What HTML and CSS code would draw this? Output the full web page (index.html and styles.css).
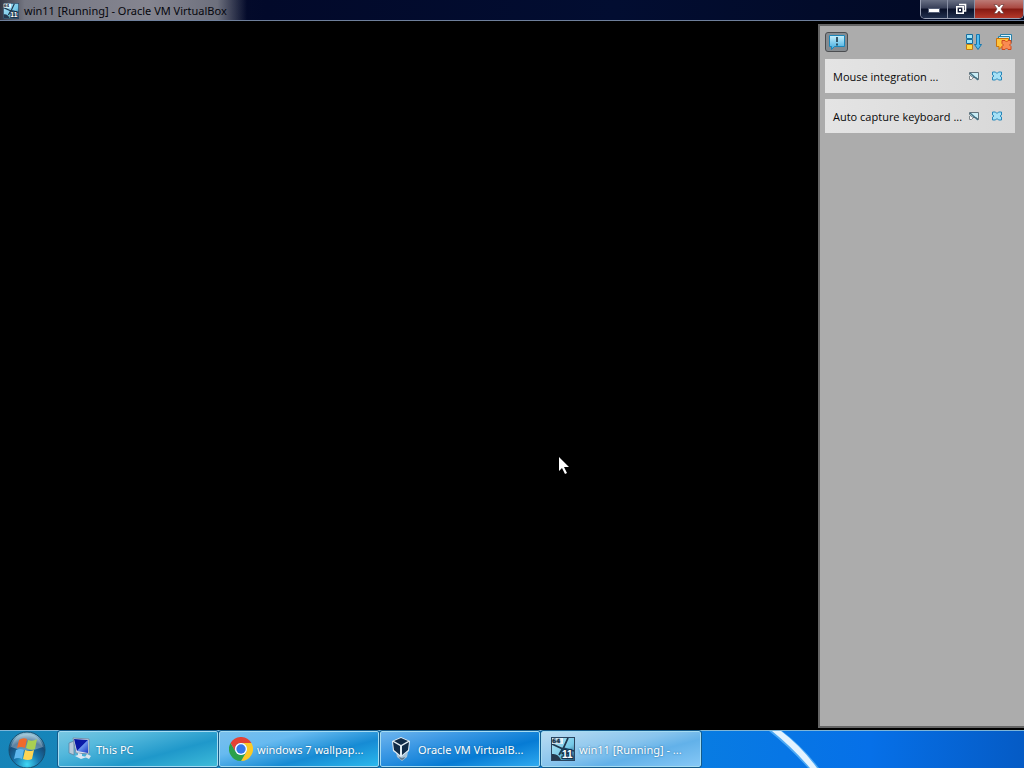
FILE: index.html
```html
<!DOCTYPE html>
<html lang="en">
<head>
<meta charset="utf-8">
<title>win11 [Running] - Oracle VM VirtualBox</title>
<link rel="stylesheet" href="styles.css">
</head>
<body>
<svg class="defs" aria-hidden="true">
  <defs>
    <linearGradient id="sky" x1="0" y1="0" x2="0" y2="1"><stop offset="0" stop-color="#c9f1fc"/><stop offset="1" stop-color="#3ba9df"/></linearGradient>
    <linearGradient id="slate" x1="0" y1="0" x2="1" y2="1"><stop offset="0" stop-color="#b8e6f5"/><stop offset=".6" stop-color="#74c9e8"/><stop offset="1" stop-color="#28506c"/></linearGradient>
    <radialGradient id="orb" cx=".5" cy=".9" r=".85"><stop offset="0" stop-color="#3fd8f5"/><stop offset=".4" stop-color="#1877ae"/><stop offset=".75" stop-color="#164b78"/><stop offset="1" stop-color="#8cbcd2"/></radialGradient>
    <linearGradient id="screen" x1="0" y1="0" x2="1" y2="1"><stop offset="0" stop-color="#0717a0"/><stop offset=".5" stop-color="#0a19a8"/><stop offset=".55" stop-color="#6a94ee"/><stop offset="1" stop-color="#1a37c4"/></linearGradient>
    <symbol id="vm" viewBox="0 0 24 24">
      <rect x=".5" y=".5" width="23" height="23" fill="url(#slate)" stroke="#2b4560"/>
      <path d="M1 17q6-1 9 6H1z" fill="#25394e"/>
      <path d="M1 7l11 5L17 1M12 11l11 3M12 11L8 18" fill="none" stroke="#20384f" stroke-width="1.800"/>
      <rect x="1" y="1" width="11" height="6" fill="#e9f3f8"/>
      <text x="1" y="6" class="vm-bits">64</text>
      <text x="11" y="21" class="vm-version">11</text>
    </symbol>
    <symbol id="detach" viewBox="0 0 12 12">
      <path d="M1.500 2.500h9v7L8 7.500H5L1.500 4.500z" fill="#c9edf6" stroke="#64747d"/>
      <path d="M2 3l8 7" stroke="#3f6f83" stroke-width="1.300"/>
      <path d="M1.500 6v3.500h2L5 8" fill="#f6f6f6" stroke="#82898d"/>
    </symbol>
    <symbol id="dismiss" viewBox="0 0 12 12">
      <path d="M1.500 2h3L6 3.500 7.500 2h3v3l-1.500 1 1.500 1v3h-3L6 8.500 4.500 10h-3V7L3 6 1.500 5z" fill="#a5e1f6" stroke="#2787ba"/>
    </symbol>
  </defs>
</svg>
<div class="desktop">
  <header class="titlebar">
    <div class="caption"><svg class="caption-icon" aria-hidden="true"><use href="#vm"/></svg><h1>win11 [Running] - Oracle VM VirtualBox</h1></div>
    <div class="window-buttons">
      <button class="win-btn minimize" aria-label="Minimize"><svg width="14" height="12" viewBox="0 0 14 12"><rect x="1.500" y="5.500" width="11" height="4" fill="#fff" stroke="#555f77"/></svg></button>
      <button class="win-btn restore" aria-label="Restore"><svg width="14" height="14" viewBox="0 0 14 14"><path d="M5 2.500h6.500V9H10M2.800 4.800h6.400v6.400H2.800z" fill="none" stroke="#fff" stroke-width="1.600"/><rect x="5" y="7" width="2" height="2" fill="#fff"/></svg></button>
      <button class="win-btn close" aria-label="Close"><svg width="14" height="12" viewBox="0 0 14 12"><path d="M2 1.500h3l2 2.500 2-2.500h3L9 6l3 4.500H9L7 8l-2 2.500H2L5 6z" fill="#fff" stroke="#6d3a38" stroke-width=".7"/></svg></button>
    </div>
  </header>
  <div class="workspace">
    <main class="vm-screen" aria-label="Virtual machine display">
      <svg class="pointer" width="12" height="19" viewBox="0 0 12 19" aria-hidden="true"><path d="M1 1v14l3-3 3 6 2-1-3-6h5z" fill="#fff"/></svg>
    </main>
    <aside class="notifications" aria-label="Notification center">
      <div class="tools">
        <button class="tool pressed" aria-label="Toggle notifications"><svg width="18" height="16" viewBox="0 0 18 16"><path d="M1.500 1.500h15v11h-10l-3 3v-3h-2z" fill="url(#sky)" stroke="#1b86ba"/><path d="M9 3v5M9 9.500v2" stroke="#142c3c" stroke-width="1.500"/></svg></button>
        <button class="tool sort" aria-label="Sort"><svg width="18" height="18" viewBox="0 0 18 18"><path d="M1.500 1.500h6v4h-6zM1.500 6.500h6v4h-6z" fill="#9be4fb" stroke="#176d9d"/><path d="M1.500 11.500h6v5h-6z" fill="#ffdb43" stroke="#c47a14"/><path d="M11.500 1.500h3v10h2L13 16.500 9.500 11.500h2z" fill="#54bdf0" stroke="#1776ac"/></svg></button>
        <button class="tool" aria-label="Delete all"><svg width="18" height="18" viewBox="0 0 18 18"><path d="M5.500 1.500h11v8h-11z" fill="#dff5fc" stroke="#2780a8"/><path d="M3.500 3.500h11v8h-11z" fill="#bde9f7" stroke="#2780a8"/><path d="M1.500 5.500h12v8H7l-3 3v-3H1.500z" fill="#ffc33c" stroke="#c9710b"/><path d="M7 7.500h3L11.500 9 13 7.500h3v3L14.500 12l1.500 1.500v3h-3L11.500 15 10 16.500H7v-3L8.500 12 7 10.500z" fill="#f98b52" stroke="#d0481d"/></svg></button>
      </div>
      <article class="note"><h2>Mouse integration ...</h2><button aria-label="Suppress mouse integration message"><svg><use href="#detach"/></svg></button><button aria-label="Close mouse integration message"><svg><use href="#dismiss"/></svg></button></article>
      <article class="note"><h2>Auto capture keyboard ...</h2><button aria-label="Suppress keyboard message"><svg><use href="#detach"/></svg></button><button aria-label="Close keyboard message"><svg><use href="#dismiss"/></svg></button></article>
    </aside>
  </div>
  <nav class="taskbar" aria-label="Taskbar">
    <svg class="wallpaper" width="90" height="37" viewBox="0 0 90 37" aria-hidden="true"><path d="M23 0h13q20 15 37 37H62Q43 16 23 0z" fill="#4ba9f5"/><path d="M26 0h9q20 15 36 37h-7Q47 17 26 0z" fill="#e3f3ff"/></svg>
    <button class="start" aria-label="Start"><svg width="40" height="38" viewBox="0 0 40 38"><circle cx="20" cy="19" r="18" fill="url(#orb)" stroke="#174e70"/><path d="M4 16Q8 3 20 3t16 13Q20 23 4 16z" fill="#fff" opacity=".3"/><path d="M12 9q4-3 8-1l-2 9q-4-2-8 0z" fill="#ef6a2b"/><path d="M21 9q5 2 9-1l-2 10q-4 2-9-1z" fill="#a8cf52"/><path d="M9 19q4-2 8 0l-2 9q-4-2-8 0z" fill="#5eb7ee"/><path d="M18 19q5 2 9 0l-2 9q-4 2-9 0z" fill="#ffd554"/></svg></button>
    <button class="task this-pc"><svg width="24" height="24" viewBox="0 0 24 24" aria-hidden="true"><path d="M1 6l5-2v14l-5-2z" fill="#b8c9da" stroke="#567c9c" stroke-width=".7"/><path d="M5 1l16 1v15L8 16z" fill="#dde3ec" stroke="#7790aa"/><path d="M6 2l14 1v13L9 14z" fill="url(#screen)"/><path d="M10 16l4 1v2l5 1-6 2-6-3 3-1z" fill="#dce8f3"/><path d="M19 17l4 2-2 3-4-2z" fill="#d8e4ed"/></svg><span>This PC</span></button>
    <button class="task chrome"><svg width="24" height="24" viewBox="0 0 24 24" aria-hidden="true"><path d="M22.400 6A12 12 0 0 1 12 24l5.200-9A6 6 0 0 0 12 6z" fill="#fbc926"/><path d="M12 24A12 12 0 0 1 1.600 6l5.200 9A6 6 0 0 0 17.200 15z" fill="#2ba14b"/><path d="M1.600 6A12 12 0 0 1 22.400 6H12a6 6 0 0 0-5.200 9z" fill="#e44234"/><circle cx="12" cy="12" r="6" fill="#fff"/><circle cx="12" cy="12" r="4.700" fill="#3478eb"/></svg><span>windows 7 wallpap...</span></button>
    <button class="task oracle"><svg width="24" height="24" viewBox="0 0 24 24" aria-hidden="true"><path d="M6 15l6 4 6-4-1 5-5 4-5-4z" fill="#a9c3d6"/><path d="M11 0l9 4-1 10-8 6-8-6L2 4z" fill="#e2edf3"/><path d="M11 1l7 3-7 4-7-4zM3 5l7 4v9l-6-5zM19 5l-7 4v9l6-5z" fill="#102b47"/><path d="M9 20l3 1 3-1-1 2-2 1-2-1z" fill="#60798e"/></svg><span>Oracle VM VirtualB...</span></button>
    <button class="task active" aria-current="true"><svg width="24" height="24" aria-hidden="true"><use href="#vm"/></svg><span>win11 [Running] - ...</span></button>
  </nav>
</div>
</body>
</html>
```
FILE: styles.css
```css
* { box-sizing: border-box; }
body { margin: 0; background: #000; font: 11px/16px "Noto Sans", "Open Sans", sans-serif; }
button { margin: 0; padding: 0; border: 0; background: none; font: inherit; color: inherit; }
svg { display: block; flex: none; }
h1, h2 { margin: 0; font-weight: 400; white-space: nowrap; }
.defs { position: absolute; width: 0; height: 0; }
.vm-bits { font: bold 6px "DejaVu Sans", sans-serif; fill: #172c3d; }
.vm-version { font: bold 10px "Liberation Sans", sans-serif; fill: #fff; stroke: #142639; stroke-width: 2px; paint-order: stroke; }

.desktop { display: flex; flex-direction: column; min-height: 100vh; }
.titlebar { display: flex; justify-content: space-between; height: 21px; background: linear-gradient(90deg, #11162e, #02092a 26%, #020d31 60%, #020923); border-bottom: 1px solid #6e7f9b; }
.caption { display: flex; align-items: center; gap: 5px; padding: 1px 20px 0 3px; background: linear-gradient(90deg, #343744, #747681 10%, #858590 60%, #6d707d 88%, transparent); }
.caption-icon { width: 16px; height: 16px; }
.caption h1 { font-size: 11px; line-height: 16px; color: #05060c; padding-top: 1px; }
.window-buttons { display: flex; align-self: flex-start; height: 19px; border: solid #9aa1b4; border-width: 0 1px 1px; border-radius: 0 0 5px 5px; overflow: hidden; }
.win-btn { display: flex; align-items: center; justify-content: center; width: 27px; background: linear-gradient(#697084, #373f58 45%, #080f27 50%, #22304e); border-right: 1px solid #8990a5; }
.win-btn.close { width: 48px; border: 0; background: linear-gradient(#bd7b76, #a94740 45%, #851a12 50%, #b4382a); }

.workspace { display: flex; flex: 1; background: #000; }
.vm-screen { position: relative; flex: 1; }
.pointer { position: absolute; left: 558px; top: 435px; }
.notifications { width: 206px; margin: 3px 0 2px; padding: 5px 9px 0 5px; background: #acacac; border: solid #656565; border-width: 2px 0 2px 2px; }
.tools { display: flex; align-items: center; gap: 8px; height: 22px; margin-bottom: 6px; }
.tool { display: flex; align-items: center; justify-content: center; width: 22px; height: 20px; }
.pressed { width: 23px; border: 1px solid #4b4d50; border-radius: 3px; background: #858b90; }
.sort { margin-left: auto; }
.note { display: flex; align-items: center; height: 34px; margin-bottom: 6px; padding: 0 12px 0 8px; background: linear-gradient(90deg, #e4e4e4, #d8d8d8); }
.note h2 { flex: 1; font: 11px/16px "Open Sans", "Noto Sans", sans-serif; color: #080808; padding-top: 2px; }
.note button, .note svg { width: 12px; height: 12px; }
.note button + button { margin-left: 11px; }

.taskbar { position: relative; display: flex; height: 38px; gap: 1px; border-top: 1px solid #7db5d8; background: linear-gradient(90deg, #107ab4, #168fd1 20%, #087ce2 68%, #0670e8 85%, #055bc5); }
.wallpaper { position: absolute; left: 746px; top: 0; }
.start { width: 57px; padding-left: 7px; background: linear-gradient(#1685ba, #1784b8); overflow: hidden; }
.task { display: flex; align-items: center; gap: 4px; width: 160px; height: 36px; padding-left: 9px; border: 1px solid #a5dcf2; border-radius: 2px; color: #fff; white-space: nowrap; outline: 1px solid #155b8b; text-shadow: 0 0 2px #176091; }
.task span { padding-top: 1px; }
.this-pc { background: linear-gradient(165deg, #78c7e2, #54b8dc 30%, #1f98ca 65%, #3ebbd9); }
.chrome { background: linear-gradient(165deg, #79c0ed, #67baf0 30%, #168bd4 65%, #2bb8ed); }
.oracle { background: linear-gradient(165deg, #6eb5ed, #3b98e4 30%, #067bd4 65%, #2faaf0); }
.active { background: linear-gradient(165deg, #b9dcf2, #88c4ed 45%, #62b1e9 65%, #86c8f6); }
```
